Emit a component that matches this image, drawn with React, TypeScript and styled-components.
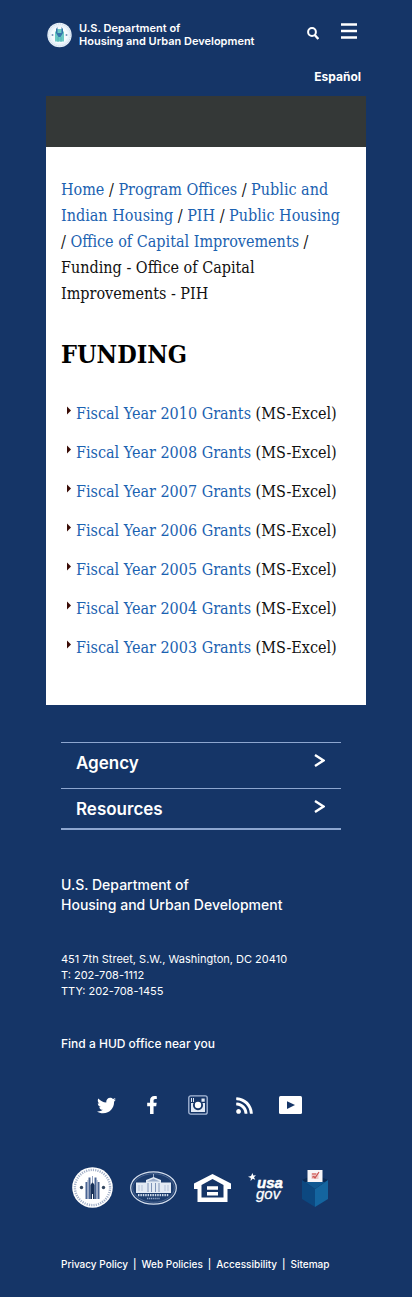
import React from "react";
import styled, { createGlobalStyle } from "styled-components";
import { FaTwitter, FaRss, FaFacebookF } from "react-icons/fa";

const navy = "#153567";
const sans = `Inter, "Open Sans", sans-serif`;
const serif = `"DejaVu Serif Condensed", "DejaVu Serif", serif`;

const GlobalStyle = createGlobalStyle`
  *, *::before, *::after { box-sizing: border-box; }
  body { margin: 0; background: ${navy}; font-family: ${sans}; color: #fff; }
  a { color: inherit; text-decoration: none; }
  ul { list-style: none; margin: 0; padding: 0; }
  svg { display: block; }
`;

const Page = styled.div`
  margin: 0 46px;
`;

const Header = styled.header`
  padding: 22px 5px 10px 1px;
`;

const HeaderBar = styled.div`
  display: flex;
  align-items: center;
  height: 26px;
`;

const Brand = styled.a`
  display: flex;
  align-items: center;
  gap: 7px;
  margin-right: auto;
  font-size: 11px;
  font-weight: 600;
  line-height: 13px;
  white-space: nowrap;
`;

const IconButton = styled.button`
  display: flex;
  padding: 0;
  border: 0;
  background: none;
  color: #fff;
  cursor: pointer;
`;

const HeaderTools = styled.div`
  display: flex;
  align-items: flex-start;
  gap: 22px;
  padding-right: 4px;
  height: 24px;

  ${IconButton}:first-child {
    padding-top: 4px;
  }
`;

const LanguageRow = styled.div`
  display: flex;
  justify-content: flex-end;
  margin-top: 20px;
  font-size: 12px;
  font-weight: 700;
  line-height: 18px;
`;

const Banner = styled.div`
  height: 51px;
  background: #343837;
`;

const Main = styled.main`
  padding: 30px 17px 44px 15px;
  background: #fff;
  color: #111;
  font-family: ${serif};
  font-size: 16px;
  line-height: 26px;

  a { color: #1b62b1; }
`;

const Title = styled.h1`
  margin: 31px 0 29px;
  font-size: 25px;
  font-weight: 700;
  line-height: 34px;
  color: #000;
`;

const GrantList = styled.ul`
  display: grid;
  gap: 13px;
`;

const GrantItem = styled.li`
  display: flex;
  gap: 5px;
  padding-left: 6px;
  white-space: nowrap;

  svg { flex: none; margin-top: 5px; }
`;

const Footer = styled.footer`
  padding: 37px 15px 22px;
`;

const FooterMenu = styled.nav`
  margin-right: 10px;
  border-bottom: 2px solid #8da6cf;
`;

const MenuToggle = styled.button`
  display: flex;
  justify-content: space-between;
  width: 100%;
  padding: 8px 16px 13px 15px;
  border: 0;
  border-top: 1px solid #8da6cf;
  background: none;
  color: #fff;
  font-family: inherit;
  font-size: 17px;
  font-weight: 600;
  line-height: 24px;
  cursor: pointer;

  &:last-child { padding-bottom: 7px; }
  svg { margin-top: 3px; }
`;

const Department = styled.p`
  margin: 45px 0 0;
  font-size: 14px;
  font-weight: 500;
  line-height: 20px;
`;

const Address = styled.address`
  margin-top: 36px;
  font-size: 11px;
  font-style: normal;
  line-height: 16px;
`;

const OfficeLink = styled.a`
  display: block;
  margin-top: 36px;
  font-size: 12px;
  font-weight: 500;
  line-height: 18px;
`;

const SocialList = styled.ul`
  display: flex;
  margin: 41px 0 0 22px;

  li { display: flex; align-items: center; justify-content: center; width: 46px; height: 22px; }
`;

const PartnerList = styled.ul`
  display: flex;
  align-items: center;
  gap: 17px;
  margin: 51px 0 0 11px;
`;

const LegalLinks = styled.nav`
  display: flex;
  gap: 5px;
  margin-top: 46px;
  font-size: 10px;
  font-weight: 500;
  line-height: 20px;
  white-space: nowrap;
`;

const BrandSeal = () => (
  <svg width="25" height="26" viewBox="0 0 25 26" aria-hidden="true">
    <circle cx="12.5" cy="13" r="12.2" fill="#e9f2fa" />
    <circle cx="12.5" cy="13" r="11" fill="none" stroke="#c4d4e6" strokeWidth="1" strokeDasharray="1 1" />
    <circle cx="12.5" cy="13" r="8.6" fill="#f6fbfe" />
    <path d="M8 19.500V10l2-2v-1h5v1l2 2v9.500z" fill="#6cc9c4" />
    <path d="M9 11V7l1.500-2v6h4V5L16 7v4l-2.500 4h-2z" fill="#3574ab" />
    <path d="M11 15v5M14 15v5" stroke="#4db3b4" strokeWidth=".8" />
    <circle cx="5.5" cy="13" r="1" fill="#7393b8" />
    <circle cx="19.5" cy="13" r="1" fill="#7393b8" />
  </svg>
);

const SearchIcon = () => (
  <svg width="12" height="13" viewBox="0 0 12 13" aria-hidden="true">
    <circle cx="5" cy="5" r="3.9" fill="none" stroke="#fff" strokeWidth="2" />
    <path d="M7.8 8l3.5 4" stroke="#fff" strokeWidth="2.3" />
  </svg>
);

const MenuIcon = () => (
  <svg width="16" height="17" viewBox="0 0 16 17" aria-hidden="true">
    <path d="M0 1.500h16M0 8h16M0 14.500h16" stroke="#fff" strokeWidth="2.4" />
  </svg>
);

const Bullet = () => (
  <svg width="4" height="9" viewBox="0 0 4 9" aria-hidden="true">
    <path d="M0 .5l4 4-4 4z" fill="#3a0c06" />
  </svg>
);

const Chevron = () => (
  <svg width="11" height="13" viewBox="0 0 11 13" aria-hidden="true">
    <path d="M1 1l8.5 5.5L1 12" fill="none" stroke="#fff" strokeWidth="2.4" />
  </svg>
);

const InstagramIcon = () => (
  <svg width="20" height="20" viewBox="0 0 20 20" aria-hidden="true">
    <rect x=".8" y=".8" width="18.4" height="18.4" rx="2" fill="none" stroke="#a9bbd9" strokeWidth="1.3" />
    <path d="M3 8h2.5a5 5 0 1 0 9 0H17v9H3z" fill="#e2eaf5" />
    <circle cx="10" cy="10" r="3.2" fill="#fff" />
    <path d="M3 3h1v4H3zM5 3h1v4H5zM13.5 3.5h3.2v3.2h-3.2z" fill="#e2eaf5" />
  </svg>
);

const YoutubeIcon = () => (
  <svg width="23" height="18" viewBox="0 0 23 18" aria-hidden="true">
    <rect width="23" height="18" rx="1.5" fill="#fff" />
    <path d="M8 5.2l8 3.9-8 3.9z" fill={navy} />
  </svg>
);

const HudSeal = () => (
  <svg width="41" height="41" viewBox="0 0 41 41" aria-hidden="true">
    <circle cx="20.5" cy="20.5" r="20.3" fill="#fff" />
    <circle cx="20.5" cy="20.5" r="17.6" fill="none" stroke="#a3b0c8" strokeWidth="2.4" strokeDasharray="1.2 1.1" />
    <circle cx="20.5" cy="20.5" r="14.6" fill="#fff" />
    <path d="M14.500 32V15M17.500 32V10.500M23.500 32V10.500M26.500 32V15" stroke="#4a6594" strokeWidth="2" />
    <path d="M16 32V13M25 32V13M20.500 15V9" stroke="#8fa0bf" strokeWidth="1" />
    <path d="M18.500 32V18l2-3 2 3v14h-1.500v-5h-1v5z" fill="#173058" />
    <circle cx="9.5" cy="20.5" r="1.7" fill="#33465f" />
    <circle cx="31.5" cy="20.5" r="1.7" fill="#33465f" />
  </svg>
);

const WhiteHouseSeal = () => (
  <svg width="47" height="34" viewBox="0 0 47 34" aria-hidden="true">
    <ellipse cx="23.5" cy="17" rx="22.8" ry="16.2" fill="#1c3c6d" stroke="#d4deed" strokeWidth="1.2" />
    <ellipse cx="23.5" cy="17" rx="20.8" ry="14.3" fill="none" stroke="#5d759f" strokeWidth=".7" />
    <path d="M23.5 3v4" stroke="#bccae0" strokeWidth=".8" />
    <path d="M6 11.500h10V9l7.500-3L31 9v2.500h10V22H6z" fill="#e3eaf4" />
    <path d="M9 14v6M12 14v6M35 14v6M38 14v6" stroke="#b3c1d8" strokeWidth="1" />
    <path d="M18 12v9M21.500 12v9M25.500 12v9M29 12v9" stroke="#8094b8" strokeWidth="1" />
    <path d="M17 10.500l6.500-3 6.500 3z" fill="#9aacca" />
    <path d="M8 24.200h31" stroke="#cbd7e8" strokeWidth="2.200" strokeDasharray="1.500 .9" />
    <path d="M17 27.500h13" stroke="#96a9c9" strokeWidth="1.400" strokeDasharray="1.200 .7" />
  </svg>
);

const EqualHousing = () => (
  <svg width="37" height="28" viewBox="0 0 37 28" aria-hidden="true">
    <path
      fillRule="evenodd"
      fill="#fff"
      d="M18.500 0L37 9.500V15h-3.500v13h-30V15H0V9.500zM18.500 5L7.500 11v12.500h22V11zM13 12.200h11v3.500H13zM13 18h11v3.500H13z"
    />
  </svg>
);

const GovText = styled.text<{ $bold?: boolean }>`
  font-family: "Liberation Sans", sans-serif;
  font-size: 15px;
  font-style: italic;
  font-weight: ${(p) => (p.$bold ? 700 : 400)};
  fill: #fff;
  stroke: #fff;
  stroke-width: ${(p) => (p.$bold ? "0.5" : "0.3")};
`;

const UsaGov = () => (
  <svg width="36" height="32" viewBox="0 0 36 32" role="img" aria-label="USA.gov">
    <path d="M4.500 1l.8 2.600L8 3.200 6 5.200l1.300 2.600-2.600-1L2.600 9l.2-3L0 4.800l3-.8z" fill="#fff" />
    <GovText x="9" y="16" $bold>usa</GovText>
    <GovText x="8" y="27">gov</GovText>
  </svg>
);

const VoteBox = () => (
  <svg width="28" height="40" viewBox="0 0 28 40" aria-hidden="true">
    <path d="M1 12l7-3h12l7 3-13 9z" fill="#0a2a55" />
    <path d="M6.500 2h15v12h-15z" fill="#f7f4f7" />
    <path d="M10.500 5h7v6h-7z" fill="#eec6c6" />
    <path d="M11 6h4M11 9h4M12.500 8l1.500 2 4-6" stroke="#c9504f" strokeWidth="1.200" fill="none" />
    <path d="M1 12l13 9v18L1 31z" fill="#0c4880" />
    <path d="M27 12l-13 9v18l13-8z" fill="#14659f" />
    <path d="M4 14h20l-10 7z" fill="#0f5791" />
  </svg>
);

const years = [2010, 2008, 2007, 2006, 2005, 2004, 2003];
const crumbs = ["Home", "Program Offices", "Public and Indian Housing", "PIH", "Public Housing", "Office of Capital Improvements"];
const legal = ["Privacy Policy", "Web Policies", "Accessibility", "Sitemap"];

const social = [
  { name: "Twitter", icon: <FaTwitter size={19} /> },
  { name: "Facebook", icon: <FaFacebookF size={18} /> },
  { name: "Instagram", icon: <InstagramIcon /> },
  { name: "RSS", icon: <FaRss size={19} /> },
  { name: "YouTube", icon: <YoutubeIcon /> },
];

const partners = [
  { name: "HUD", icon: <HudSeal /> },
  { name: "The White House", icon: <WhiteHouseSeal /> },
  { name: "Equal Housing", icon: <EqualHousing /> },
  { name: "USA.gov", icon: <UsaGov /> },
  { name: "Vote", icon: <VoteBox /> },
];

export default function App() {
  return (
    <>
      <GlobalStyle />
      <Page>
        <Header>
          <HeaderBar>
            <Brand href="#">
              <BrandSeal />
              <span>
                U.S. Department of
                <br />
                Housing and Urban Development
              </span>
            </Brand>
            <HeaderTools>
              <IconButton type="button" aria-label="Search">
                <SearchIcon />
              </IconButton>
              <IconButton type="button" aria-label="Menu">
                <MenuIcon />
              </IconButton>
            </HeaderTools>
          </HeaderBar>
          <LanguageRow>
            <a href="#" lang="es">Español</a>
          </LanguageRow>
        </Header>
        <Banner />
        <Main>
          <nav aria-label="Breadcrumb">
            {crumbs.map((c) => (
              <React.Fragment key={c}>
                <a href="#">{c}</a>
                {" / "}
              </React.Fragment>
            ))}
            Funding - Office of Capital Improvements - PIH
          </nav>
          <Title>FUNDING</Title>
          <GrantList>
            {years.map((y) => (
              <GrantItem key={y}>
                <Bullet />
                <span>
                  <a href="#">Fiscal Year {y} Grants</a> (MS-Excel)
                </span>
              </GrantItem>
            ))}
          </GrantList>
        </Main>
        <Footer>
          <FooterMenu aria-label="Footer">
            <MenuToggle type="button">
              Agency
              <Chevron />
            </MenuToggle>
            <MenuToggle type="button">
              Resources
              <Chevron />
            </MenuToggle>
          </FooterMenu>
          <Department>
            U.S. Department of
            <br />
            Housing and Urban Development
          </Department>
          <Address>
            451 7th Street, S.W., Washington, DC 20410
            <br />
            T: 202-708-1112
            <br />
            TTY: 202-708-1455
          </Address>
          <OfficeLink href="#">Find a HUD office near you</OfficeLink>
          <SocialList>
            {social.map((s) => (
              <li key={s.name}>
                <a href="#" aria-label={s.name}>{s.icon}</a>
              </li>
            ))}
          </SocialList>
          <PartnerList>
            {partners.map((p) => (
              <li key={p.name}>
                <a href="#" aria-label={p.name}>{p.icon}</a>
              </li>
            ))}
          </PartnerList>
          <LegalLinks aria-label="Legal">
            {legal.map((l, i) => (
              <React.Fragment key={l}>
                {i > 0 && <span>|</span>}
                <a href="#">{l}</a>
              </React.Fragment>
            ))}
          </LegalLinks>
        </Footer>
      </Page>
    </>
  );
}
